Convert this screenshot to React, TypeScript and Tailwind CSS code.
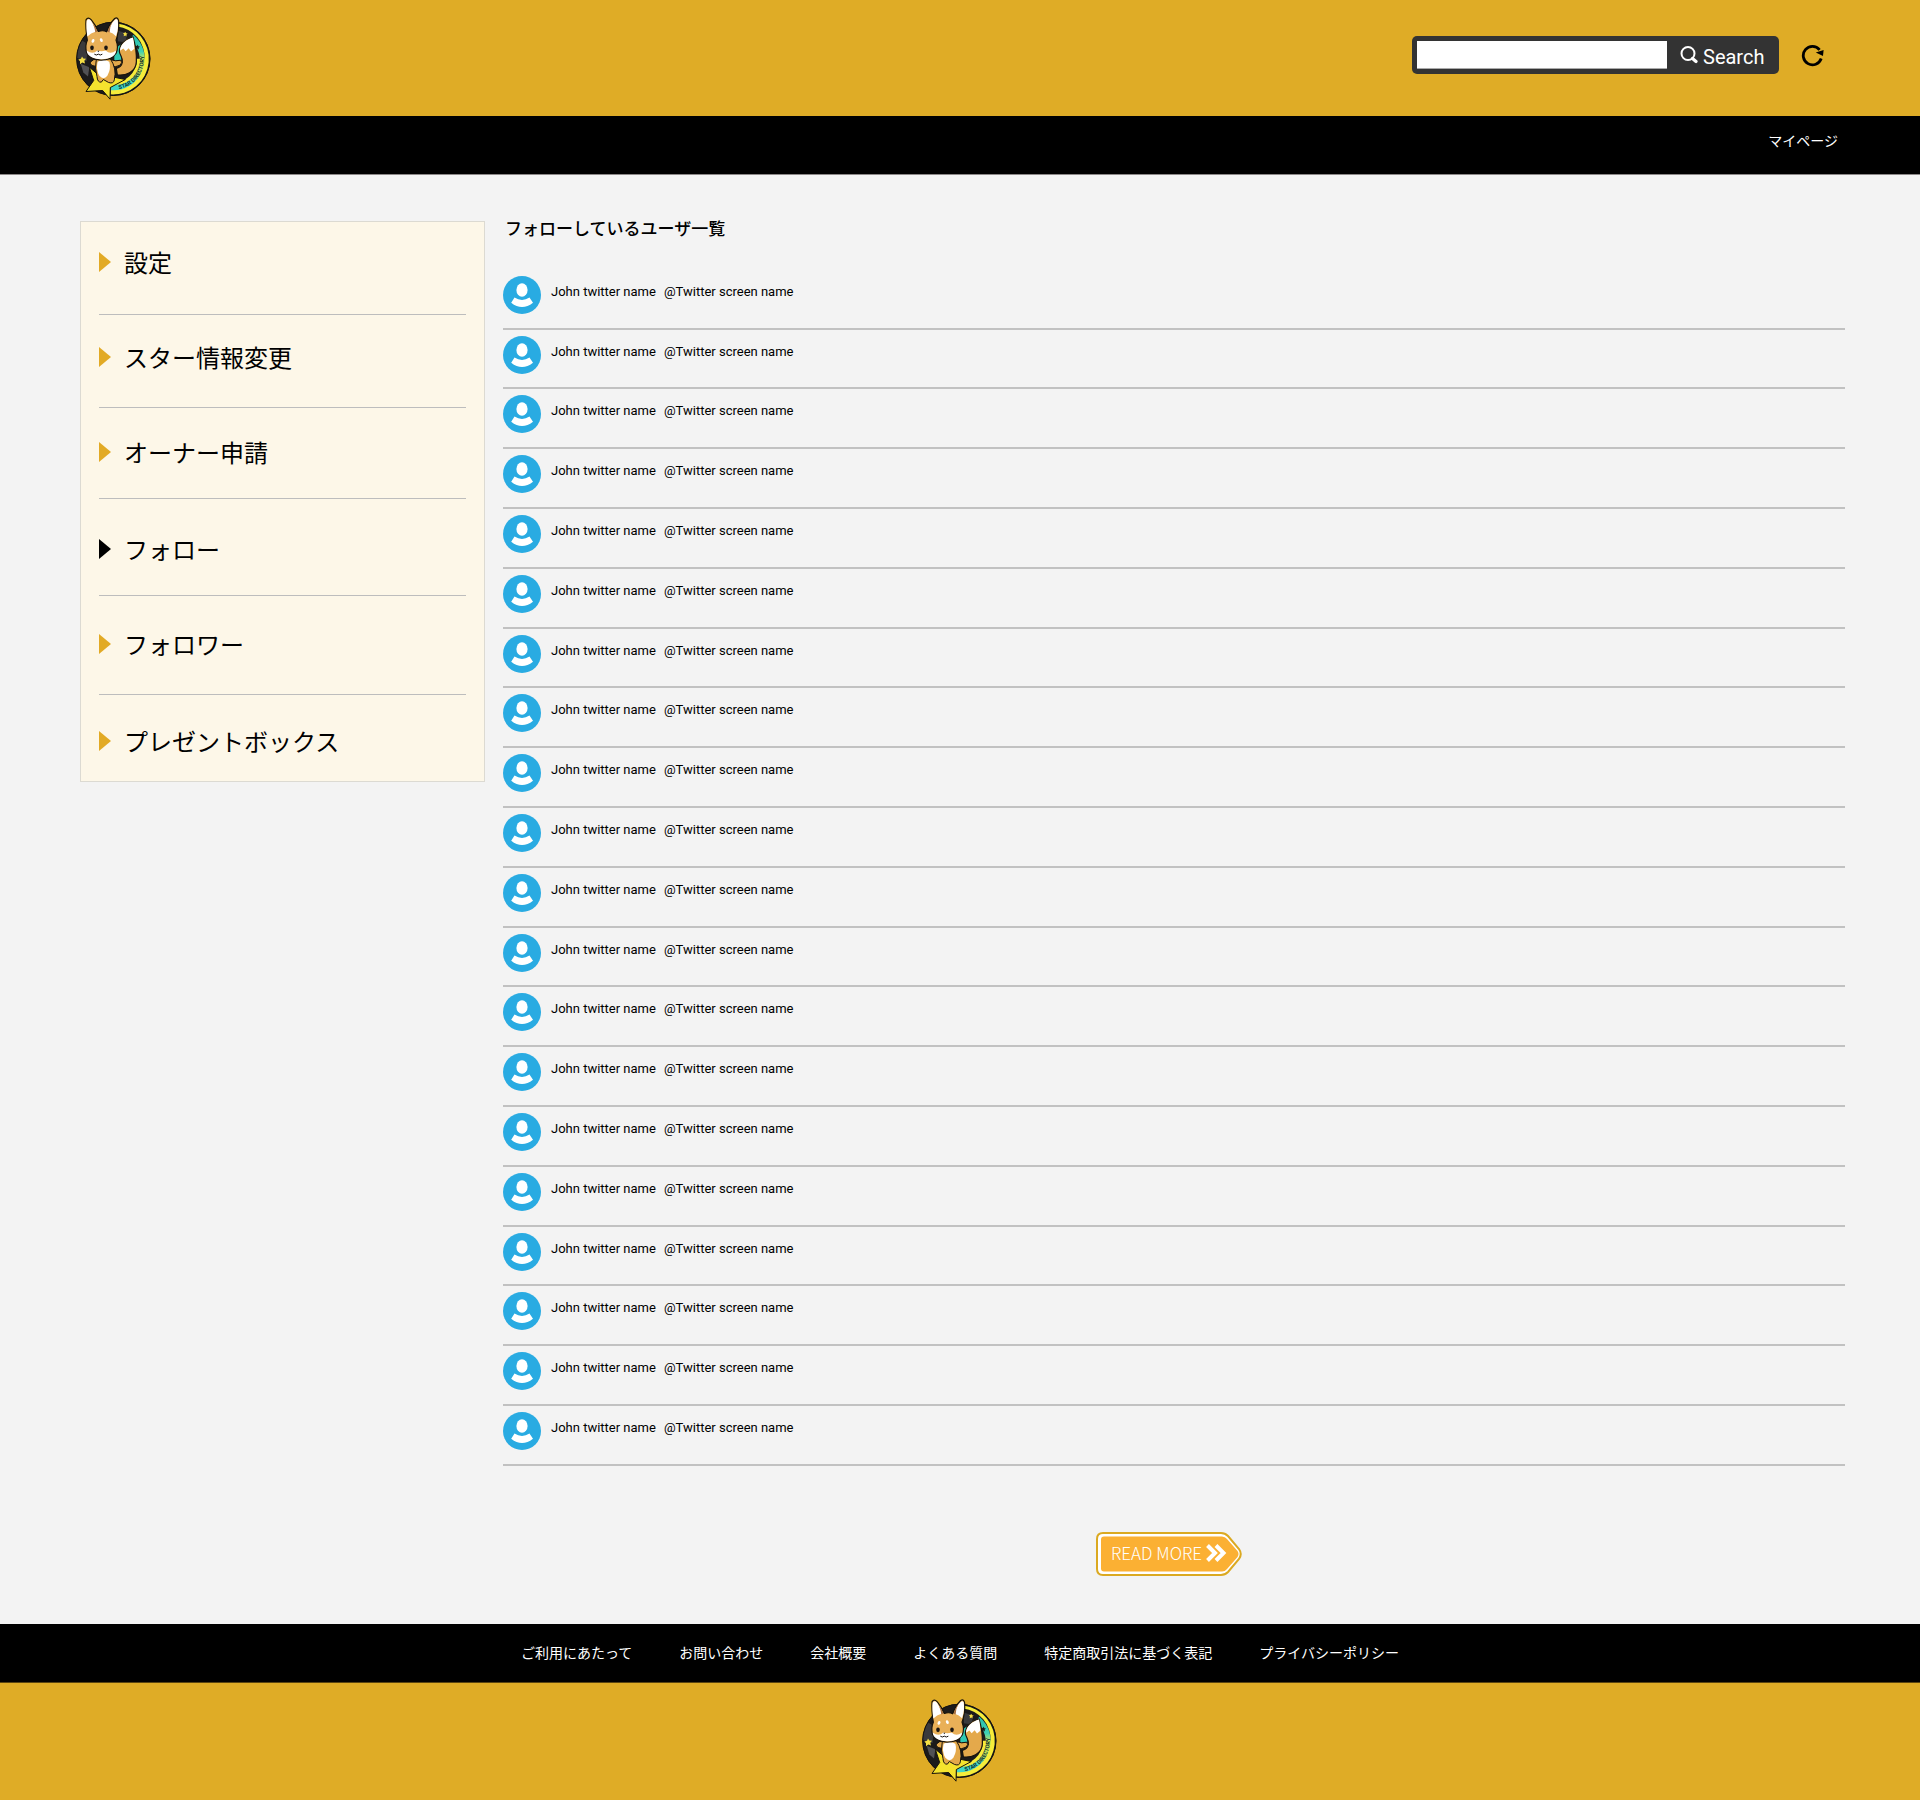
import React from "react";

const GOTHIC = "font-['Noto_Sans_CJK_JP',sans-serif]";

function Logo() {
  return (
    <svg viewBox="45 33 234 254" className="h-[85px] w-[78px]" role="img" aria-label="STAR DIRECTORY">
      <defs>
        <path id="ring-text" d="M177 252 A92 92 0 0 0 243 122" />
        <linearGradient id="ring-band" x1="0" y1="0" x2="0" y2="1">
          <stop offset="0" stopColor="#27bfae" />
          <stop offset="0.3" stopColor="#3fd0b4" />
          <stop offset="0.45" stopColor="#d6e84e" />
          <stop offset="0.7" stopColor="#c3e560" />
          <stop offset="0.85" stopColor="#3fd6c8" />
          <stop offset="1" stopColor="#3fd6c8" />
        </linearGradient>
      </defs>
      <circle cx="160" cy="161" r="111" fill="#1c1b1b" />
      <path d="M172 55 A107 107 0 0 1 152 268 L152 232 A71 71 0 0 0 231 161 L254 161 A94 94 0 0 0 172 64 Z" fill="#f6ec3a" />
      <path d="M152 255 A94 94 0 0 0 220 89 L209 103 A76 76 0 0 1 152 239 Z" fill="url(#ring-band)" />
      <path d="M163 132 L182 118 L184 165 L163 166 Z" fill="#2fc9b4" />
      <path d="M50 158 A110 110 0 0 1 66 106 L92 122 Q80 140 80 168 Z" fill="#3a3a3c" />
      <path d="M62 176 L88 186 L84 214 L70 202 Z" fill="#515154" />
      <path d="M172 76 L200 84 L198 112 L174 108 Z" fill="#3a3a3c" />
      <circle cx="160" cy="161" r="110" fill="none" stroke="#14120f" strokeWidth="3" />
      <text fontSize="17" fontWeight="700" fill="#12302c" fontFamily="Roboto, sans-serif">
        <textPath href="#ring-text">STAR DIRECTORY</textPath>
      </text>
      <path d="M66 154l4 6 8 1-5 6 2 8-8-3-7 5 0-9-5-5 8-2z" fill="#f4df45" />
      <path d="M196 80l2 4 5 1-4 4 1 5-4-3-5 2 1-5-3-4 5-1z" fill="#f4df45" />
      <path d="M233 118l2 5 5 1-4 4 1 5-5-3-4 2 1-5-3-4 5-1z" fill="#1c1b1b" />
      <path d="M88 186 L112 206 L196 223 L151 247 L150 282 L128 256 L78 259 L101 226 Z" fill="#f5e32e" stroke="#17130c" strokeWidth="3" strokeLinejoin="round" />
      <path d="M172 209 C195 212 228 202 229 170 C230 147 226 118 219 95 C197 101 178 117 178 139 C180 151 190 159 187 172 C185 182 178 188 169 190 Z" fill="#e4a94b" stroke="#17130c" strokeWidth="3.5" strokeLinejoin="round" />
      <path d="M219 97 C199 103 180 117 180 137 L190 130 L197 138 L206 129 L213 139 L223 131 Q223 112 219 97 Z" fill="#fff" />
      <path d="M112 162 Q99 161 91 171 Q90 181 105 183 L114 184 Z M150 163 Q168 170 182 165 Q189 172 180 180 Q168 187 151 184 Z" fill="#e4a94b" stroke="#17130c" strokeWidth="3" strokeLinejoin="round" />
      <path d="M109 161 Q103 190 111 214 Q112 232 124 231 L130 223 L146 232 Q161 237 163 224 Q171 190 151 161 Z" fill="#e4a94b" stroke="#17130c" strokeWidth="3" strokeLinejoin="round" />
      <path d="M113 170 Q131 159 148 170 Q154 191 142 212 Q131 226 118 212 Q107 193 113 170 Z" fill="#fff" />
      <path d="M82 105 Q76 70 78 44 Q84 34 94 44 Q106 58 115 79 Q129 74 140 80 Q148 56 164 40 Q174 34 176 48 Q178 78 168 105 Q176 126 169 143 Q154 165 123 165 Q91 163 80 143 Q74 122 82 105 Z" fill="#e9b058" stroke="#17130c" strokeWidth="3.5" strokeLinejoin="round" />
      <path d="M82 94 Q78 66 80 47 Q86 37 93 47 Q103 61 108 79 Q92 83 82 94 Z M168 93 Q177 70 173 45 Q168 39 162 47 Q150 60 146 80 Q160 84 168 93 Z" fill="#fff" />
      <path d="M98 54 Q107 65 112 79 L106 82 Q104 66 98 54 Z M156 53 Q146 66 143 80 L149 82 Q149 66 156 53 Z" fill="#a86f43" />
      <path d="M80 136 Q98 150 112 136 Q124 140 137 136 Q151 150 168 136 Q167 161 124 162 Q83 161 80 136 Z" fill="#fff" />
      <ellipse cx="99" cy="107" rx="4" ry="6" fill="#fff" transform="rotate(25 99 107)" />
      <ellipse cx="124" cy="105" rx="4" ry="6" fill="#fff" transform="rotate(-25 124 105)" />
      <ellipse cx="96" cy="128" rx="5.5" ry="7" fill="#1a1512" />
      <ellipse cx="138" cy="128" rx="5.5" ry="7" fill="#1a1512" />
      <path d="M103 147 Q109 152 115 147 Q121 152 127 147" fill="none" stroke="#1a1512" strokeWidth="3" />
      <path d="M112 137h6l-3 4z" fill="#1a1512" />
    </svg>
  );
}

function SearchIcon() {
  return (
    <svg viewBox="0 0 18 18" className="size-[18px]" fill="none" stroke="#fff" aria-hidden="true">
      <circle cx="8" cy="7.5" r="6.5" strokeWidth="2" />
      <path d="M12.5 12.5 L16 15.5" strokeWidth="3.2" strokeLinecap="round" />
    </svg>
  );
}

function ReloadIcon() {
  return (
    <svg viewBox="0 0 23 23" className="size-[23px]" aria-hidden="true">
      <path d="M20.2 14.5 A9.2 9.2 0 1 1 18.6 5.8" fill="none" stroke="#000" strokeWidth="2.8" />
      <path d="M22.6 6 L22 12 L14.8 8.6 Z" fill="#000" />
    </svg>
  );
}

function Avatar() {
  return (
    <svg viewBox="0 0 38 38" className="size-[38px] shrink-0" aria-hidden="true">
      <circle cx="19" cy="19" r="19" fill="#29abe2" />
      <ellipse cx="19" cy="14" rx="5.6" ry="6.8" fill="#fff" />
      <path d="M11.5 21.6 Q19 26.2 26.5 21.6 L30 26.8 Q19 35.4 8.2 26.8 Z" fill="#fff" />
    </svg>
  );
}

const menu = [
  { label: "設定", spacing: "pt-5.5 pb-8.5" },
  { label: "スター情報変更", spacing: "pt-6 pb-8" },
  { label: "オーナー申請", spacing: "pt-6.5 pb-7" },
  { label: "フォロー", spacing: "pt-8 pb-7", current: true },
  { label: "フォロワー", spacing: "pt-7.5 pb-8" },
  { label: "プレゼントボックス", spacing: "pt-7 pb-5.5" },
];

const users = Array.from({ length: 20 }, (_, id) => ({
  id,
  name: "John twitter name",
  screenName: "@Twitter screen name",
}));

const footerLinks = [
  "ご利用にあたって",
  "お問い合わせ",
  "会社概要",
  "よくある質問",
  "特定商取引法に基づく表記",
  "プライバシーポリシー",
];

export default function App() {
  return (
    <div className={`bg-[#f3f3f3] text-black ${GOTHIC}`}>
      <header>
        <div className="flex h-[116px] items-start justify-between bg-[#dfac26] pr-24 pl-[75px]">
          <a href="#" className="mt-4">
            <Logo />
          </a>
          <div className="mt-9 flex items-center gap-[22px]">
            <form className="flex rounded-[5px] bg-[#333] p-[5px]" onSubmit={(e) => e.preventDefault()}>
              <input
                type="text"
                aria-label="Search"
                className="h-7 w-[250px] border-b border-[#aaa] bg-white px-2 font-['Roboto',sans-serif] text-base outline-none"
              />
              <button
                type="submit"
                className="flex h-7 w-[107px] items-center gap-[5px] pl-[13px] font-['Roboto',sans-serif] text-xl leading-7 text-white"
              >
                <SearchIcon />
                <span className="pt-1">Search</span>
              </button>
            </form>
            <button type="button" aria-label="Reload">
              <ReloadIcon />
            </button>
          </div>
        </div>
        <nav className="flex h-[59px] justify-end border-b border-[#8c8888] bg-black pt-3.5 pr-[82px]">
          <a href="#" className="text-sm text-white">マイページ</a>
        </nav>
      </header>

      <div className="flex items-start gap-[18px] pr-[75px] pl-20">
        <aside className="mt-[46px] w-[405px] shrink-0 border border-[#dcdad2] bg-[#fdf7e8]">
          <ul className="px-[18px]">
            {menu.map((m) => (
              <li key={m.label} className={`border-b border-[#bdbdbd] last:border-b-0 ${m.spacing}`}>
                <a href="#" aria-current={m.current ? "page" : undefined} className="flex items-center gap-[13px] text-2xl leading-9">
                  <svg
                    viewBox="0 0 12 20"
                    className={m.current ? "h-5 w-3 fill-black" : "h-5 w-3 fill-[#e2aa25]"}
                    aria-hidden="true"
                  >
                    <path d="M0 0 L12 10 L0 20 Z" />
                  </svg>
                  {m.label}
                </a>
              </li>
            ))}
          </ul>
        </aside>

        <main className="flex-1 pt-[41px] pb-12">
          <h1 className="mb-[30px] pl-0.5 text-[17px] leading-6 font-medium">フォローしているユーザ一覧</h1>
          <ul>
            {users.map((u) => (
              <li
                key={u.id}
                className="flex h-[60px] items-start gap-2.5 border-b-2 border-[#c1c1c1] pt-1.5 font-['Roboto',sans-serif] text-[13px] leading-8 nth-[5n+2]:h-[59px]"
              >
                <Avatar />
                <p className="flex gap-2">
                  <span>{u.name}</span>
                  <span>{u.screenName}</span>
                </p>
              </li>
            ))}
          </ul>
          <div className="mt-[66px] flex justify-center pr-2.5">
            <button type="button" className="relative flex h-11 w-[146px] items-center gap-1 pb-0.5 pl-[15px] text-white">
              <svg viewBox="0 0 146 44" className="absolute inset-0 size-full" aria-hidden="true">
                <path d="M7 1 H125 Q129 1 132 4 L143 17 Q146.500 22 143 27 L132 40 Q129 43 125 43 H7 Q1 43 1 37 V7 Q1 1 7 1 Z" fill="#fff" stroke="#dba921" strokeWidth="2" />
                <path d="M8 4.500 H126 Q129 4.500 131 7 L141.500 19 Q143.500 22 141.500 25 L131 37 Q129 39.500 126 39.500 H8 Q5 39.500 5 36.500 V7.500 Q5 4.500 8 4.500 Z" fill="#fbb033" />
              </svg>
              <span className="relative text-[17px] leading-6 font-light">READ MORE</span>
              <svg viewBox="0 0 21 18" className="relative h-[18px] w-[21px]" fill="none" stroke="#fff" strokeWidth="4" aria-hidden="true">
                <path d="M1.500 1.500 L9 9 L1.500 16.500 M10 1.500 L17.500 9 L10 16.500" />
              </svg>
            </button>
          </div>
        </main>
      </div>

      <footer>
        <nav className="flex h-[59px] justify-center gap-[47px] border-b border-[#5a4510] bg-black pt-[18px] text-sm text-white">
          {footerLinks.map((l) => (
            <a key={l} href="#">{l}</a>
          ))}
        </nav>
        <div className="flex h-[117px] justify-center bg-[#dfac26] pt-[15px]">
          <Logo />
        </div>
      </footer>
    </div>
  );
}
